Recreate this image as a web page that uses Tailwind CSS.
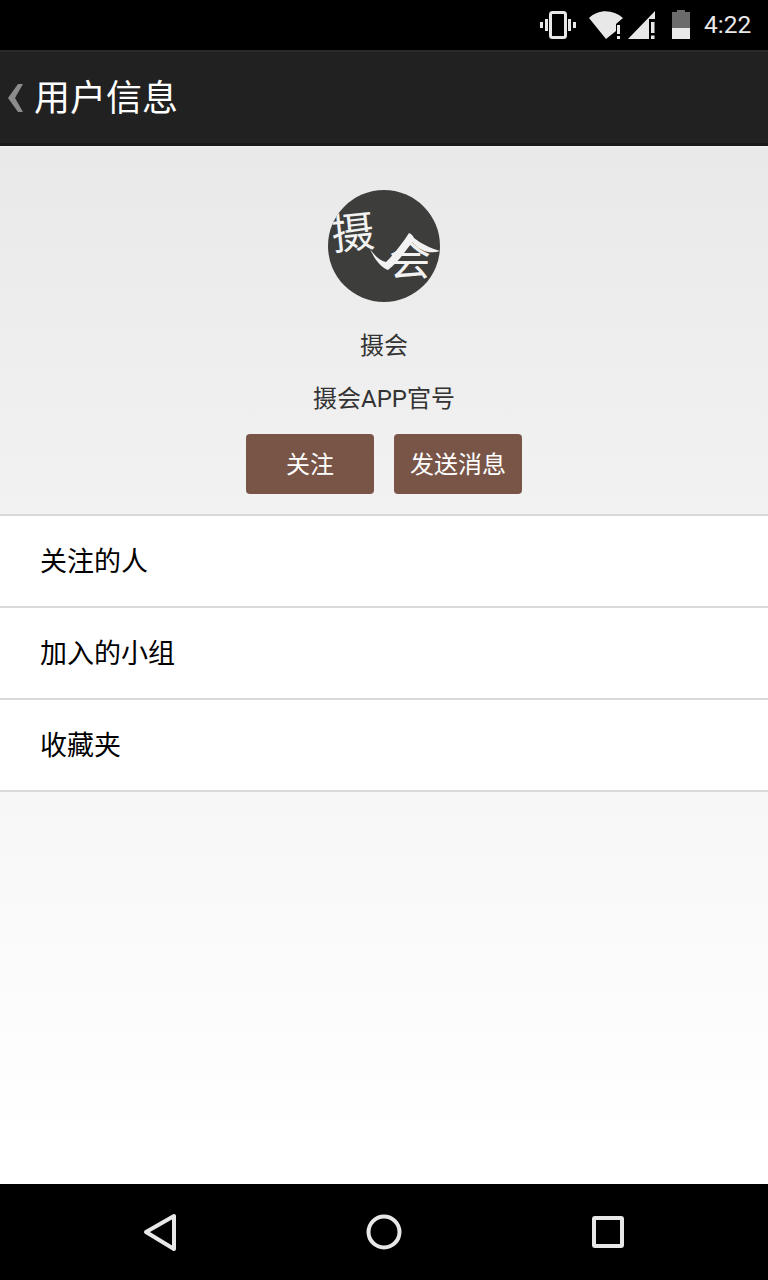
<!DOCTYPE html>
<html lang="zh-CN">

<head>
    <meta charset="UTF-8">
    <title>用户信息</title>
    <script src="https://cdn.jsdelivr.net/npm/@tailwindcss/browser@4"></script>
</head>

<body class="bg-white font-['Roboto','Noto_Sans_CJK_SC',sans-serif]">
    <div class="w-[768px] h-[1280px] flex flex-col overflow-hidden">
        <!-- Status bar -->
        <div class="h-[50px] bg-black flex items-center justify-end pr-[16px] text-[#e8e8e8]">
            <svg width="38" height="28" viewBox="0 0 38 28" class="mr-[11px]" fill="#e8e8e8">
                <rect x="11.5" y="1.5" width="15" height="25" rx="2" fill="none" stroke="#e8e8e8" stroke-width="3" />
                <rect x="6" y="8" width="3" height="12" />
                <rect x="29" y="8" width="3" height="12" />
                <rect x="1" y="11" width="3" height="6" />
                <rect x="34" y="11" width="3" height="6" />
            </svg>
            <svg width="36" height="30" viewBox="0 0 36 30" class="mr-[3px]" fill="#e8e8e8">
                <path d="M1 8 C10 -1 25 -1 35 8 L28 14 L28 21 L18 29 Z" />
                <rect x="29" y="15" width="3" height="9" />
                <rect x="29" y="26" width="3" height="3" />
            </svg>
            <svg width="30" height="30" viewBox="0 0 30 30" class="mr-[14px]" fill="#e8e8e8">
                <path d="M1 29 L28 1 L28 9 L22 9 L22 29 Z" />
                <rect x="24" y="12" width="3.5" height="11" />
                <rect x="24" y="25.5" width="3.5" height="3.5" />
            </svg>
            <svg width="20" height="30" viewBox="0 0 20 30" class="mr-[13px]">
                <rect x="6" y="0" width="8" height="3" fill="#6b6b6b" />
                <rect x="1" y="2" width="18" height="16" fill="#6b6b6b" />
                <rect x="1" y="18" width="18" height="11" fill="#e8e8e8" />
            </svg>
            <span class="text-[24.5px] leading-none font-['Roboto',sans-serif] w-[48px]">4:22</span>
        </div>

        <!-- App bar -->
        <div class="h-[96px] bg-[#212121] border-t-2 border-t-[#2a2a2a] border-b-[3px] border-b-[#191919] flex items-center">
            <svg width="16" height="28" viewBox="0 0 16 28" class="ml-[8px] mr-[10px]" fill="#8c8c8c">
                <path d="M10 0 L15 0 L7 14 L15 28 L10 28 L0 14 Z" />
            </svg>
            <span class="text-[36px] leading-none text-white pt-[2px]">用户信息</span>
        </div>

        <!-- Profile -->
        <div class="h-[368px] bg-[linear-gradient(#eeeeee,#e9e9e9_4px,#f2f2f2)] flex flex-col items-center pt-[44px]">
            <div class="relative w-[112px] h-[112px] rounded-full bg-[#3d3e3c] overflow-hidden">
                <span class="absolute left-[3px] top-[18px] text-[43px] leading-none text-[#f2f2f2] font-['Noto_Sans_CJK_SC',serif] -rotate-6">摄</span>
                <span class="absolute left-[61px] top-[46px] text-[42px] leading-none text-[#f2f2f2] font-['Noto_Sans_CJK_SC',serif]">会</span>
                <svg width="112" height="112" viewBox="0 0 112 112" class="absolute left-0 top-0" fill="#f2f2f2">
                    <path d="M42 59 C47 66 52 71 58 72 C66 64 74 54 81 43 C84 44 85 46 86 48 C92 53 102 58 112 61 C103 64 92 62 84 52 C76 64 68 74 60 80 C52 77 46 68 42 59 Z" />
                </svg>
            </div>
            <p class="mt-[28px] text-[24px] leading-[32px] text-[#333333]">摄会</p>
            <p class="mt-[21px] text-[24px] leading-[32px] text-[#333333]">摄会APP官号</p>
            <div class="mt-[19px] flex gap-[20px]">
                <button class="w-[128px] h-[60px] rounded bg-[#795548] text-white text-[24px] pt-px">关注</button>
                <button class="w-[128px] h-[60px] rounded bg-[#795548] text-white text-[24px] pt-px">发送消息</button>
            </div>
        </div>

        <!-- List -->
        <ul class="bg-white border-t-2 border-t-[#d9d9d9]">
            <li class="h-[92px] pl-[40px] pt-[2px] flex items-center border-b-2 border-b-[#d9d9d9] text-[27px] text-black">关注的人</li>
            <li class="h-[92px] pl-[40px] pt-[2px] flex items-center border-b-2 border-b-[#d9d9d9] text-[27px] text-black">加入的小组</li>
            <li class="h-[92px] pl-[40px] pt-[2px] flex items-center border-b-2 border-b-[#d9d9d9] text-[27px] text-black">收藏夹</li>
        </ul>

        <!-- Empty area -->
        <div class="flex-1 bg-gradient-to-b from-[#f7f7f7] to-white to-90%"></div>

        <!-- Navigation bar -->
        <div class="h-[96px] bg-black relative">
            <svg width="768" height="96" viewBox="0 0 768 96" fill="none" stroke="#e8e8e8" stroke-width="4" stroke-linejoin="round">
                <path d="M146 48 L174 32 L174 65 Z" />
                <circle cx="384" cy="48" r="15.5" />
                <rect x="594" y="34" width="28" height="28" rx="1" />
            </svg>
        </div>
    </div>
</body>

</html>
